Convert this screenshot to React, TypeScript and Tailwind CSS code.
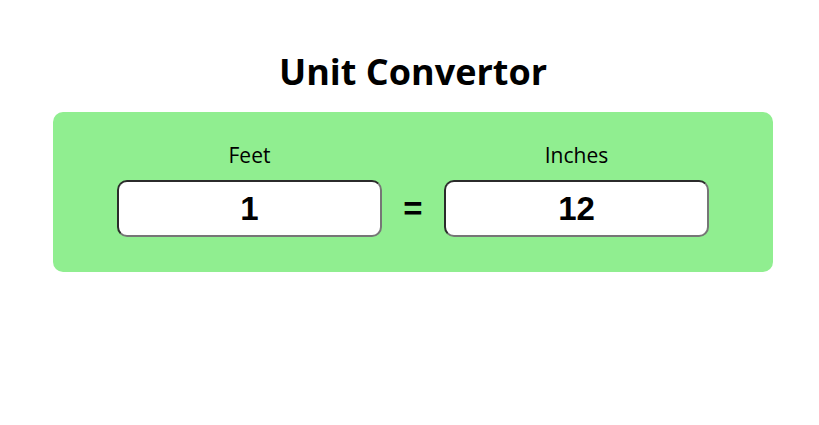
import React, { useState } from 'react';

const App: React.FC = () => {
  const [feet, setFeet] = useState('1');
  const inches = feet === '' || isNaN(Number(feet)) ? '' : String(Number(feet) * 12);

  return (
    <div className="w-full min-h-[425px] bg-white pl-[7px] flex flex-col items-center font-['Open_Sans',sans-serif]">
      <h1 className="mt-[48px] text-[36px] leading-[48px] font-bold text-black">Unit Convertor</h1>

      <div className="mt-[16px] w-[720px] h-[160px] rounded-[10px] bg-[#90ee90] px-16 flex items-end pb-[35px] gap-[22px]">
        {/* Feet */}
        <div className="flex flex-col items-center">
          <label className="text-[21px] leading-[28px] text-black mb-[11px]">Feet</label>
          <input
            value={feet}
            onChange={(e) => setFeet(e.target.value)}
            className="w-[265px] h-[57px] rounded-[10px] bg-white text-center text-[33px] font-bold font-['Liberation_Sans',Arial,sans-serif] text-black border-2 border-t-[#2b2b2b] border-l-[#2b2b2b] border-b-[#767676] border-r-[#767676] outline-none"
          />
        </div>

        <div className="h-[57px] flex items-center text-[33px] font-bold font-['Liberation_Sans',Arial,sans-serif] text-black w-[18px] justify-center">=</div>

        {/* Inches */}
        <div className="flex flex-col items-center">
          <label className="text-[21px] leading-[28px] text-black mb-[11px]">Inches</label>
          <input
            value={inches}
            readOnly
            className="w-[265px] h-[57px] rounded-[10px] bg-white text-center text-[33px] font-bold font-['Liberation_Sans',Arial,sans-serif] text-black border-2 border-t-[#2b2b2b] border-l-[#2b2b2b] border-b-[#767676] border-r-[#767676] outline-none"
          />
        </div>
      </div>
    </div>
  );
};

export default App;
